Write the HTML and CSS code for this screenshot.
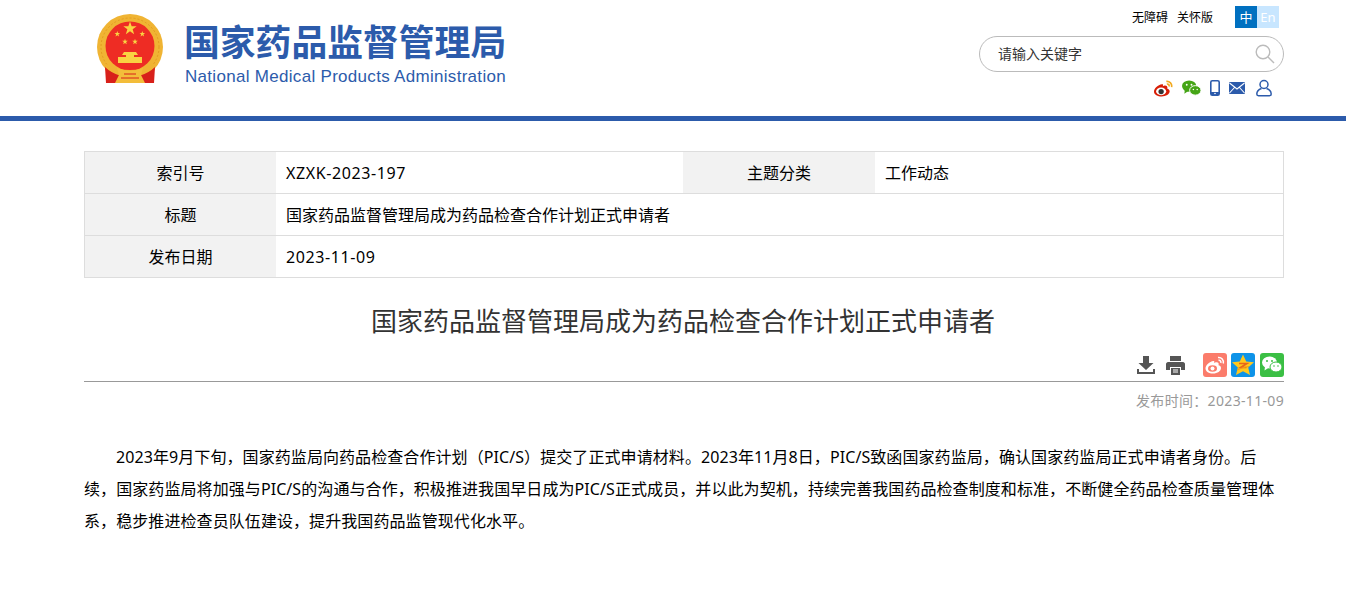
FILE: index.html
```html
<!DOCTYPE html>
<html lang="zh-CN">
<head>
  <meta charset="UTF-8">
  <title>国家药品监督管理局成为药品检查合作计划正式申请者</title>
  <link rel="stylesheet" href="styles.css">
</head>
<body>
  <header class="header">
    <div class="wrap header-inner">
      <div class="brand">
        <svg class="emblem" width="66" height="70" viewBox="0 0 66 70">
          <defs>
            <path id="star" d="M0 -1 L.235 -.324 L.951 -.309 L.38 .124 L.588 .809 L0 .4 L-.588 .809 L-.38 .124 L-.951 -.309 L-.235 -.324 Z"/>
          </defs>
          <circle cx="33" cy="33" r="33" fill="#f0b433"/>
          <circle cx="33" cy="33" r="29" fill="none" stroke="#e39b22" stroke-width="1" stroke-dasharray="2 2"/>
          <circle cx="33" cy="32" r="24.500" fill="#ee2c24"/>
          <g fill="#f9d342">
            <use href="#star" transform="translate(33 14.500) scale(7)"/>
            <use href="#star" transform="translate(20.300 20) scale(3)"/>
            <use href="#star" transform="translate(45.300 20) scale(3)"/>
            <use href="#star" transform="translate(28 27.700) scale(3)"/>
            <use href="#star" transform="translate(38 27.700) scale(3)"/>
            <path d="M27 38 H39 L41 41 H37 V43 H45 V49 H21 V43 H29 V41 H25 Z"/>
          </g>
          <path d="M9 50 Q33 62 57 50 L58 56 Q33 69 8 56 Z" fill="#f0b433"/>
          <path d="M8 53 Q14 59 24 62 L20 69 L9 69 Z M58 53 Q52 59 42 62 L46 69 L57 69 Z" fill="#d8201a"/>
          <path d="M20 54 Q33 60 46 54 L44 61 L48 69 H18 L22 61 Z" fill="#f3bd3a"/>
          <path d="M24 64 H42 M27 60 H39" stroke="#d8201a" stroke-width="1"/>
        </svg>
        <div class="brand-text">
          <div class="brand-cn">国家药品监督管理局</div>
          <div class="brand-en">National Medical Products Administration</div>
        </div>
      </div>
      <div class="tools">
        <div class="tools-top">
          <a class="top-link">无障碍</a>
          <a class="top-link">关怀版</a>
          <div class="lang">
            <span class="lang-cn">中</span><span class="lang-en">En</span>
          </div>
        </div>
        <div class="search">
          <span class="search-text">请输入关键字</span>
          <svg width="20" height="20" viewBox="0 0 20 20" fill="none" stroke="#bbb" stroke-width="1.4">
            <circle cx="8" cy="8" r="6.800"/>
            <path d="M13 13 L19 19"/>
          </svg>
        </div>
        <div class="social">
          <svg width="19" height="17" viewBox="0 0 20 17">
            <path d="M8.500 4 C4 4.500 0 8.500 0 12 C0 15 4 17 8 17 C12.500 17 16.500 14.500 16.500 11.500 C16.500 9.800 15 9 14 8.800 C14.500 6.500 13.500 5.300 11.500 5.300 C10.500 5.300 9.800 5.800 9.300 6 C9.800 4.500 9.500 3.800 8.500 4 Z" fill="#d81e06"/>
            <ellipse cx="7.500" cy="11.500" rx="5.300" ry="4" fill="#fff"/>
            <circle cx="7.500" cy="11.700" r="2.800" fill="#333"/>
            <path d="M13 1 C16.500 .6 19.300 3.500 18.500 7 M13.500 3.800 C15.200 3.500 16.300 4.800 15.800 6.500" fill="none" stroke="#f2a91f" stroke-width="1.700"/>
          </svg>
          <svg width="19" height="16" viewBox="0 0 20 16">
            <ellipse cx="7.500" cy="6" rx="7.500" ry="6" fill="#45a516"/>
            <path d="M3 10 L2.500 14 L7 11 Z" fill="#45a516"/>
            <ellipse cx="14" cy="10.500" rx="6" ry="5" fill="#45a516" stroke="#fff" stroke-width="1"/>
            <circle cx="5" cy="4.500" r="1" fill="#fff"/><circle cx="10" cy="4.500" r="1" fill="#fff"/>
            <circle cx="12" cy="9.500" r=".8" fill="#fff"/><circle cx="16" cy="9.500" r=".8" fill="#fff"/>
          </svg>
          <svg width="10" height="16" viewBox="0 0 10 16">
            <rect x=".8" y=".8" width="8.400" height="14.400" rx="1.500" fill="none" stroke="#2c5bab" stroke-width="1.600"/>
            <rect x="1" y="12" width="8" height="3" fill="#2c5bab"/>
            <circle cx="5" cy="13.500" r=".8" fill="#fff"/>
          </svg>
          <svg class="social-mail" width="16" height="12" viewBox="0 0 16 12">
            <rect width="16" height="12" rx="1" fill="#2c5bab"/>
            <path d="M.5 1 L8 7 L15.500 1 M.5 11 L5.500 5.500 M15.500 11 L10.500 5.500" fill="none" stroke="#fff" stroke-width="1.100"/>
          </svg>
          <svg width="16" height="18" viewBox="0 0 16 17" fill="none" stroke="#2c5bab" stroke-width="1.500">
            <circle cx="8" cy="5" r="4"/>
            <path d="M5.500 9 C2.500 10 .8 12 .8 14.500 C.8 15.500 1.500 16.200 2.500 16.200 H13.500 C14.500 16.200 15.200 15.500 15.200 14.500 C15.200 12 13.500 10 10.500 9"/>
          </svg>
        </div>
      </div>
    </div>
  </header>

  <main class="wrap">
    <div class="meta">
      <div class="meta-label">索引号</div>
      <div class="meta-value meta-num">XZXK-2023-197</div>
      <div class="meta-label">主题分类</div>
      <div class="meta-value">工作动态</div>
      <div class="meta-label">标题</div>
      <div class="meta-value meta-wide">国家药品监督管理局成为药品检查合作计划正式申请者</div>
      <div class="meta-label">发布日期</div>
      <div class="meta-value meta-wide meta-num">2023-11-09</div>
    </div>

    <h1 class="title">国家药品监督管理局成为药品检查合作计划正式申请者</h1>

    <div class="share">
      <svg class="action" width="18" height="18" viewBox="0 0 18 18" fill="#555">
        <path d="M6 0 H12 V7 H16.500 L9 14 L1.500 7 H6 Z"/>
        <path d="M0 13 H2 V16 H16 V13 H18 V18 H0 Z"/>
      </svg>
      <svg class="action action-print" width="19" height="19" viewBox="0 0 19 19" fill="#555">
        <path d="M4 0 H15 V5 H4 Z"/>
        <path d="M2 6 H17 C18 6 19 7 19 8 V14 H15 V11 H4 V14 H0 V8 C0 7 1 6 2 6 Z"/>
        <path d="M5 12 H14 V19 H5 Z"/>
        <path d="M7 14 H12 M7 16 H12" stroke="#fff" stroke-width="1"/>
      </svg>
      <span class="badge badge-weibo">
        <svg width="20" height="18" viewBox="0 0 20 18">
          <path d="M8.500 5 C4.500 5.500 .5 9 .5 12.500 C.5 15.500 4 17.500 8 17.500 C12.500 17.500 16 15 16 12 C16 10.300 14.500 9.500 13.500 9.300 C14 7.500 13.500 6.300 11.500 6.300 C10.500 6.300 9.500 6.800 9 7 C9.500 5.500 9.500 4.800 8.500 5 Z" fill="#fff"/>
          <ellipse cx="7.500" cy="12.500" rx="4.500" ry="3.300" fill="#fb7c6b"/>
          <circle cx="7.500" cy="12.500" r="2" fill="#fff"/>
          <path d="M13 1.500 C16.500 1 19 4 18.300 7.500 M13.500 4.300 C15.200 4 16.300 5.300 15.800 7" fill="none" stroke="#fff" stroke-width="1.500"/>
        </svg>
      </span>
      <span class="badge badge-qzone">
        <svg width="24" height="24" viewBox="0 0 24 24">
          <path d="M12 1.500 L15.200 8.500 L23 9.300 L17.200 14.500 L19 22 L12 18.200 L5 22 L6.800 14.500 L1 9.300 L8.800 8.500 Z" fill="#ffc81e"/>
          <path d="M8 10.500 H16 L9.500 14.500 H15.500" fill="none" stroke="#e8661a" stroke-width="1.600"/>
          <path d="M6 17 Q12 14 18 13.500" fill="none" stroke="#f09a1a" stroke-width="1"/>
        </svg>
      </span>
      <span class="badge badge-wechat">
        <svg width="20" height="17" viewBox="0 0 20 17">
          <ellipse cx="7.500" cy="6.500" rx="7.500" ry="6" fill="#fff"/>
          <path d="M3 10.500 L2.500 14.500 L7 11.500 Z" fill="#fff"/>
          <ellipse cx="14" cy="11" rx="6" ry="5" fill="#fff" stroke="#3bbf44" stroke-width="1"/>
          <circle cx="5" cy="5" r="1" fill="#3bbf44"/><circle cx="10" cy="5" r="1" fill="#3bbf44"/>
          <circle cx="12" cy="10" r=".8" fill="#3bbf44"/><circle cx="16" cy="10" r=".8" fill="#3bbf44"/>
        </svg>
      </span>
    </div>

    <div class="pubdate">发布时间：2023-11-09</div>

    <p class="content">2023年9月下旬，国家药监局向药品检查合作计划（PIC/S）提交了正式申请材料。2023年11月8日，PIC/S致函国家药监局，确认国家药监局正式申请者身份。后续，国家药监局将加强与PIC/S的沟通与合作，积极推进我国早日成为PIC/S正式成员，并以此为契机，持续完善我国药品检查制度和标准，不断健全药品检查质量管理体系，稳步推进检查员队伍建设，提升我国药品监管现代化水平。</p>
  </main>
</body>
</html>
```

FILE: styles.css
```css
* {
  box-sizing: border-box;
}
body {
  margin: 0;
  font-family: "Noto Sans", "Noto Sans CJK SC", sans-serif;
  font-size: 16px;
  color: #333;
  background: #fff;
}
.wrap {
  width: 1200px;
  margin-left: 84px;
}
.header {
  height: 121px;
  border-bottom: 5px solid #2c5bab;
}
.header-inner {
  display: flex;
  justify-content: space-between;
}
.brand {
  display: flex;
  padding: 14px 0 0 13px;
}
.emblem {
  display: block;
}
.brand-text {
  margin-left: 21px;
  margin-top: 4px;
}
.brand-cn {
  font-family: "Noto Sans CJK SC", sans-serif;
  font-size: 35.800px;
  font-weight: 700;
  line-height: 44px;
  color: #2c5bab;
  white-space: nowrap;
}
.brand-en {
  font-family: "Liberation Sans", sans-serif;
  font-size: 17px;
  line-height: 20px;
  margin: 5px 0 0 1px;
  letter-spacing: .3px;
  color: #2c5bab;
  white-space: nowrap;
}
.tools {
  width: 305px;
  display: flex;
  flex-direction: column;
  align-items: flex-end;
}
.tools-top {
  display: flex;
  align-items: center;
  height: 22px;
  margin-top: 6px;
  padding-right: 5px;
  font-size: 12px;
  color: #000;
}
.top-link {
  margin-left: 9px;
}
.lang {
  display: flex;
  margin-left: 22px;
  font-size: 13px;
  line-height: 22px;
  text-align: center;
}
.lang-cn,
.lang-en {
  width: 22px;
  height: 22px;
}
.lang-cn {
  background: #0070c0;
  color: #fff;
}
.lang-en {
  background: #c8e6ff;
  color: #fff;
}
.search {
  width: 305px;
  height: 36px;
  margin-top: 8px;
  padding: 0 8px 0 18px;
  display: flex;
  align-items: center;
  justify-content: space-between;
  border: 1px solid #bbb;
  border-radius: 18px;
  font-size: 14px;
  color: #333;
}
.search-text {
  padding-bottom: 2px;
}
.social {
  display: flex;
  align-items: center;
  gap: 9px;
  height: 18px;
  margin-top: 7px;
  padding-right: 12px;
}
.social-mail {
  margin-right: 2px;
}
.meta {
  display: grid;
  grid-template-columns: 191px 407px 192px 1fr;
  grid-auto-rows: 42px;
  margin-top: 30px;
  border: 1px solid #ddd;
  border-bottom: 0;
  color: #000;
}
.meta-label,
.meta-value {
  display: flex;
  align-items: center;
  padding-bottom: 1px;
  border-bottom: 1px solid #ddd;
  font-size: 16px;
}
.meta-label {
  justify-content: center;
  background: #f2f2f2;
}
.meta-value {
  padding-left: 10px;
}
.meta-num {
  padding-bottom: 0;
  letter-spacing: .6px;
}
.meta-wide {
  grid-column: 2 / 5;
}
.title {
  margin: 23px 0 0;
  padding-right: 2px;
  font-size: 26px;
  font-weight: 400;
  line-height: 40px;
  text-align: center;
  color: #333;
}
.share {
  display: flex;
  justify-content: flex-end;
  align-items: center;
  height: 32px;
  margin-top: 9px;
  padding-bottom: 2px;
  border-bottom: 1px solid #999;
}
.action {
  margin-right: 11px;
}
.action-print {
  margin-top: 1px;
  margin-right: 18px;
}
.badge {
  display: flex;
  align-items: center;
  justify-content: center;
  width: 24px;
  height: 24px;
  margin-left: 4px;
  border-radius: 3px;
}
.badge-weibo {
  margin-left: 0;
  background: #fb7c6b;
}
.badge-qzone {
  background: #0e93e8;
}
.badge-wechat {
  margin-left: 5px;
  background: #3bbf44;
}
.pubdate {
  margin-top: 9px;
  font-size: 14px;
  line-height: 20px;
  letter-spacing: .33px;
  text-align: right;
  color: #999;
}
.content {
  margin: 30px 0 0;
  font-size: 16px;
  line-height: 32px;
  letter-spacing: .08px;
  text-indent: 32px;
  color: #000;
}
```
